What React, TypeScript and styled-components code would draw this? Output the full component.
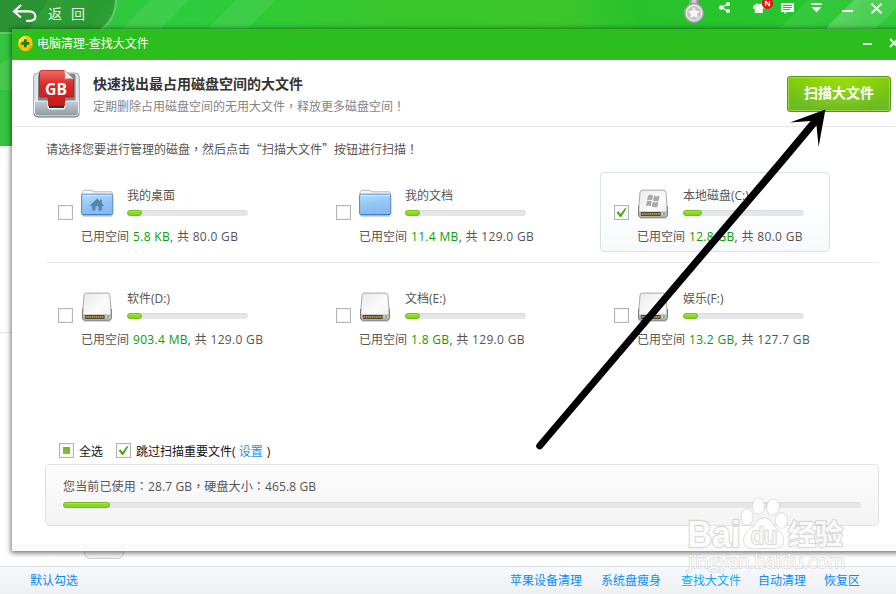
import React from 'react';
import styled, { createGlobalStyle, css } from 'styled-components';

const GlobalStyle = createGlobalStyle`
  * { box-sizing: border-box; }
  body {
    margin: 0;
    overflow: hidden;
    font: 12px/16px "Open Sans", "Noto Sans CJK SC", sans-serif;
    color: #555;
    background: #fff;
  }
`;

/* ---------- main window behind the dialog ---------- */

const Window = styled.div`
  position: relative;
  width: 896px;
  height: 594px;
  overflow: hidden;
  display: flex;
  flex-direction: column;
  background: #fff;
`;

const Banner = styled.header`
  height: 146px;
  flex: none;
  display: flex;
  justify-content: space-between;
  align-items: flex-start;
  background:
    linear-gradient(135deg, transparent 30%, rgba(255, 255, 255, 0.07) 31%, rgba(255, 255, 255, 0.07) 69%, transparent 70%) 120px 0 / 70px 30px no-repeat,
    linear-gradient(135deg, transparent 30%, rgba(255, 255, 255, 0.07) 31%, rgba(255, 255, 255, 0.07) 69%, transparent 70%) 205px 0 / 72px 30px no-repeat,
    linear-gradient(135deg, transparent 25%, rgba(255, 255, 255, 0.07) 26%, rgba(255, 255, 255, 0.03) 80%, transparent) 780px 0 / 80px 30px no-repeat,
    linear-gradient(135deg, transparent 24%, rgba(255, 255, 255, 0.2) 25%, rgba(255, 255, 255, 0.14) 70%, rgba(255, 255, 255, 0.05) 71%) 827px 0 / 80px 30px no-repeat,
    linear-gradient(145deg, transparent 50%, rgba(255, 255, 255, 0.09) 51%) 0 30px / 12px 60px no-repeat,
    linear-gradient(90deg, #35c43d 0, #2dcb3d 200px, #38c62a 400px, #3bc62a 560px, #28c12d 640px, #27c731 100%);
`;

const BackTab = styled.button`
  display: flex;
  align-items: flex-start;
  gap: 11px;
  width: 117px;
  height: 34px;
  margin: 0;
  padding: 4px 0 0 12px;
  border: 0 solid #5fcf68;
  border-width: 0 2px 2px 0;
  border-bottom-right-radius: 30px 36px;
  background: linear-gradient(125deg, #2a9232 35%, #319d36 36%, #299a30 75%, #37a53c);
  color: #e5f6e5;
  font: 14px/19px "Noto Sans CJK SC", sans-serif;
  letter-spacing: 9px;
  white-space: nowrap;
`;

const BannerTools = styled.div`
  display: flex;
  width: 212px;
  height: 26px;
`;

const Body = styled.div`
  flex: 1;
  display: flex;
  flex-direction: column;
  justify-content: flex-end;
  background: linear-gradient(#e6e6e6, #e6e6e6) 0 186px / 100% 1px no-repeat;
`;

const TabStub = styled.div`
  width: 40px;
  height: 20px;
  margin: 0 0 7px 84px;
  border: 1px solid #d2d2d2;
  border-radius: 6px;
  background: #f6f6f6;
`;

const Footer = styled.footer`
  flex: none;
  height: 28px;
  display: flex;
  align-items: center;
  padding: 1px 36px 0 30px;
  border-top: 1px solid #dce0e5;
  background: linear-gradient(#f6f8fb, #eef0f4);
`;

const FooterLinks = styled.nav`
  margin-left: auto;
  display: flex;
  gap: 20px;
`;

const Link = styled.a<{ $tone?: string; $shift?: number }>`
  color: ${(p) => p.$tone ?? '#0a8bf5'};
  margin-right: ${(p) => p.$shift ?? 0}px;
  white-space: nowrap;
`;

/* full-width punctuation centred in its cell */
const Mark = styled.span`
  font-family: "Noto Sans CJK TC", sans-serif;
`;

/* ---------- dialog ---------- */

const Dialog = styled.section`
  position: absolute;
  left: 12px;
  top: 29px;
  width: 892px;
  height: 522px;
  display: flex;
  flex-direction: column;
  background: #fff;
  box-shadow: 0 1px 5px 1px rgba(0, 0, 0, 0.55);
`;

const TitleBar = styled.div`
  flex: none;
  height: 31px;
  display: flex;
  align-items: center;
  gap: 3px;
  padding: 0 5px 3px 5px;
  background: #2cbd1e;
  color: #fff;
`;

const TitleText = styled.span`
  flex: 1;
  padding-top: 2px;
`;

const Intro = styled.div`
  flex: none;
  height: 67px;
  display: flex;
  padding: 10px 13px 0 20px;
  margin-left: 1px;
  border-bottom: 1px solid #e9e9e9;
`;

const IntroText = styled.div`
  flex: 1;
  padding: 4px 0 0 12px;
`;

const Heading = styled.h1`
  margin: 0 0 6px;
  font: bold 14px/18px "Noto Sans CJK SC", sans-serif;
  color: #333;
`;

const Sub = styled.p`
  margin: 0;
  color: #848484;
  font-family: "Noto Sans CJK SC", sans-serif;
`;

const ScanButton = styled.button`
  width: 104px;
  height: 36px;
  margin-top: 6px;
  padding: 0 0 4px;
  border: 1px solid #57961a;
  border-radius: 3px;
  box-shadow: inset 0 0 0 1px rgba(190, 235, 100, 0.55);
  background: radial-gradient(ellipse at 50% 0, #9ddc0a, transparent 75%), linear-gradient(#82cc08, #68b82a);
  color: #fff;
  font: bold 14px/18px "Noto Sans CJK SC", sans-serif;
`;

const Hint = styled.p`
  flex: none;
  margin: 14px 0 0 34px;
  font-family: "Noto Sans CJK SC", sans-serif;
`;

const Row = styled.div`
  flex: none;
  height: 103px;
  display: flex;
  gap: 48px;
  padding: 15px 0 0 32px;
`;

const Divider = styled.div`
  flex: none;
  height: 1px;
  width: 833px;
  margin: 2px 0 -3px 34px;
  background: #e9e9e9;
`;

const DiskCard = styled.div<{ $selected?: boolean }>`
  width: 230px;
  height: 80px;
  display: flex;
  padding: 13px 0 0 13px;
  border: 1px solid transparent;
  border-radius: 4px;
  ${(p) =>
    p.$selected &&
    css`
      border-color: #d3e3ea;
      background: linear-gradient(#fff 40%, #f6f9fc);
    `}
`;

const DiskInfo = styled.div`
  display: flex;
  flex-direction: column;
  margin-left: 8px;
`;

const DiskTop = styled.div`
  display: flex;
  height: 43px;
  gap: 13px;
`;

const IconSlot = styled.div`
  width: 33px;
  padding-top: 3px;
`;

const DiskName = styled.div`
  height: 16px;
  margin: 2px 0 6px;
`;

const Track = styled.div<{ $wide?: boolean }>`
  width: ${(p) => (p.$wide ? 798 : 121)}px;
  height: 6px;
  border-radius: 3px;
  background: linear-gradient(#d9d9d9, #e6e6e6 35%, #e6e6e6);
`;

const Fill = styled.div`
  height: 6px;
  border: 1px solid #76b91f;
  border-radius: 3px;
  background: linear-gradient(#b4ee4c, #86dc22 40%, #80d81e);
`;

const Usage = styled.div`
  display: flex;
  white-space: pre;
  letter-spacing: 0.32px;
  em {
    font-style: normal;
    color: #0a9d0a;
  }
`;

const UsageLabel = styled.span`
  width: 52px;
  letter-spacing: 0;
`;

const CheckFrame = styled.span<{ $drop?: number }>`
  flex: none;
  display: flex;
  align-items: center;
  justify-content: center;
  width: 15px;
  height: 15px;
  margin-top: ${(p) => p.$drop ?? 0}px;
  border: 1px solid #b5b5b5;
  background: #fff;
  box-shadow: inset 0 0 2px #ddd;
`;

const PartialMark = styled.span`
  width: 7px;
  height: 7px;
  background: linear-gradient(#6cb52d, #80c63c);
`;

const Options = styled.div`
  flex: none;
  display: flex;
  align-items: flex-start;
  height: 16px;
  margin: 80px 0 5px 47px;
  color: #111;
  span + span { margin-left: 5px; }
`;

const OptionLabel = styled.span`
  min-width: 32px;
  padding-top: 1px;
  white-space: pre;
`;

const Summary = styled.div`
  flex: none;
  width: 834px;
  height: 62px;
  margin-left: 33px;
  padding: 13px 17px 0;
  border: 1px solid #e2e2e2;
  border-radius: 5px;
  background: linear-gradient(#fcfcfc, #f4f4f4);
`;

const SummaryText = styled.div`
  height: 16px;
  margin-bottom: 8px;
  letter-spacing: 0.13px;
`;

const DialogFoot = styled.div`
  height: 7px;
  margin-top: auto;
  background: #fafafa;
`;

/* annotations that lie over the windows */
const Overlay = styled.svg`
  position: absolute;
  left: 0;
  top: 0;
  pointer-events: none;
`;

/* ---------- drawings ---------- */

const CheckMark = () => (
  <svg width="13" height="13" viewBox="0 0 13 13">
    <path d="M1.6 6.4 L3.4 5.2 L5.5 8 L10.1 2 L11.4 2.8 L6.2 11 L5 11 Z" fill="#4fa616" />
  </svg>
);

const Checkbox = ({ state, drop }: { state?: 'on' | 'partial'; drop?: number }) => (
  <CheckFrame $drop={drop}>
    {state === 'on' && <CheckMark />}
    {state === 'partial' && <PartialMark />}
  </CheckFrame>
);

const BackArrow = () => (
  <svg width="25" height="19" viewBox="0 0 25 19" fill="none" stroke="#fff" strokeWidth="2.2">
    <path d="M9 1 L2 7.5 L9 13.5 M2.5 7.3 H17 C21 7.3 23.4 9.5 23.4 12.3 C23.4 15.3 21 16.8 17.5 16.8 H14" />
  </svg>
);

const Folder = ({ home }: { home?: boolean }) => (
  <svg width="33" height="30" viewBox="0 0 33 30">
    <defs>
      <linearGradient id="folderFace" x1="0" y1="0" x2="0.3" y2="1">
        <stop offset="0" stopColor="#b9def9" />
        <stop offset="0.55" stopColor="#93c7f6" />
        <stop offset="1" stopColor="#86b9f2" />
      </linearGradient>
    </defs>
    <path d="M2 27.5 H31" stroke="#d6d6d6" />
    <path d="M1 6 V4 Q1 2.3 2.6 1.3 H10 Q12 1.3 12.5 2.8 H30 Q31.5 2.8 31.5 4.5 V8 H1Z" fill="#f7f7f7" stroke="#b5b5b5" />
    <rect x=".6" y="5.2" width="31.2" height="20.8" rx="1.6" fill="url(#folderFace)" stroke="#5288bd" />
    <path d="M1.6 6.4 H30.8" stroke="#d8effd" />
    <path d="M1.5 25.6 H31" stroke="#3f7dc9" />
    {home && (
      <path
        d="M16 9.5 L9 16.5 L10 17.5 L11.2 16.5 V21.5 H14.4 V17.3 H17.6 V21.5 H20.8 V16.5 L22 17.5 L23 16.5 L20.8 14.1 V10.5 H18.8 V12.3 Z"
        fill="#5486a9"
      />
    )}
  </svg>
);

const Drive = ({ system }: { system?: boolean }) => (
  <svg width="33" height="31" viewBox="0 0 33 31">
    <defs>
      <linearGradient id="driveTop" x1="0" y1="0" x2="1" y2="1">
        <stop offset="0" stopColor="#e9e9e9" />
        <stop offset="0.55" stopColor="#fbfbfb" />
        <stop offset="1" stopColor="#ededed" />
      </linearGradient>
    </defs>
    <path d="M2.5 29.3 H30" stroke="#ccc" />
    <path d="M5.5 1.1 H26 Q28.6 1.1 28.9 3.5 L30.4 22 V25.5 Q30.4 28.3 28 28.3 H3.8 Q1.5 28.3 1.5 25.5 V22 L3 3.5 Q3.2 1.1 5.5 1.1Z" fill="url(#driveTop)" stroke="#a9a9a9" />
    <path d="M1.6 17 V25.8 Q1.6 28.1 3.8 28.1 H28 Q30.3 28.1 30.3 25.8 V17" fill="none" stroke="#777" />
    <path d="M2.2 22 Q2.6 22.5 4 22.5 H28 Q29.4 22.5 29.8 22 V26 Q29.6 27.5 28 27.5 H4 Q2.3 27.5 2.2 26Z" fill="#a9a9a9" />
    <rect x="4" y="23" width="19.5" height="4" fill="#474747" />
    <path d="M4.5 25 H23" stroke="#d4b13a" strokeWidth="1.4" strokeDasharray="1.4 .6" />
    <rect x="24.5" y="23.3" width="4.5" height="3" fill="#c7d1c4" />
    <circle cx="27" cy="24.8" r="1" fill="#4ea64e" />
    {system && (
      <g fill="#a8a8a8" transform="translate(9 5.5)">
        <path d="M2 1.2 Q4.5 -.4 7 1 L6 5.8 Q3.5 4.6 1 6Z" />
        <path d="M8 1.3 Q10.5 2.4 13.6 1.2 L12.6 6.2 Q10 7.4 7 6.2Z" />
        <path d="M.8 7 Q3.3 5.6 5.8 7 L4.8 11.6 Q2.6 10.4 0 11.8Z" />
        <path d="M6.8 7.3 Q9.6 8.5 12.4 7.3 L11.4 12.2 Q8.8 13.3 5.9 12.1Z" />
      </g>
    )}
  </svg>
);

const GbTray = () => (
  <svg width="48" height="49" viewBox="0 0 48 49">
    <defs>
      <linearGradient id="gbRed" x1="0" y1="0" x2="0" y2="1">
        <stop offset="0" stopColor="#ef6b63" />
        <stop offset="0.4" stopColor="#d92a28" />
        <stop offset="1" stopColor="#c81818" />
      </linearGradient>
      <linearGradient id="tray" x1="0" y1="0" x2="0" y2="1">
        <stop offset="0" stopColor="#c5cfd5" />
        <stop offset="1" stopColor="#8d9ba3" />
      </linearGradient>
    </defs>
    <rect x=".7" y="3" width="45.6" height="43.5" rx="4" fill="#dfe5e8" stroke="#9ba6ac" />
    <rect x="5" y="4" width="37.5" height="28" rx="2" fill="#7c868b" />
    <path d="M1.5 31 H13 Q15 31 15 33 V37 Q15 39 17 39 H30 Q32 39 32 37 V33 Q32 31 34 31 H45.5 V42.5 Q45.5 46 42 46 H5 Q1.5 46 1.5 42.5Z" fill="url(#tray)" stroke="#f4f7f8" />
    <path d="M1 43.5 Q1.5 47 5 47 H42 Q45.6 47 46 43.5" fill="none" stroke="#65727a" />
    <path d="M9 .5 H31.5 L40.5 8.5 V27 H33 Q31.5 27 31.5 29 V36 H15.5 V29 Q15.5 27 14 27 H6.5 V2.5 Q6.5 .5 9 .5Z" fill="url(#gbRed)" stroke="#b81a18" strokeWidth=".8" />
    <path d="M31.5 .5 L40.5 8.8 Q36 7.5 32 9 Q33 5 31.5 .5Z" fill="#f2f2f2" stroke="#ccc" strokeWidth=".5" />
    <path d="M16 37 H31" stroke="#30363a" strokeWidth="2" />
    <text x="12" y="25" fill="#fff" fontFamily="Open Sans" fontWeight="700" fontSize="16" textLength="22" lengthAdjust="spacingAndGlyphs">
      GB
    </text>
  </svg>
);

const AppLogo = () => (
  <svg width="17" height="17" viewBox="0 0 17 17">
    <path d="M13.5 3.5 A7.4 7.4 0 1 0 14.6 12.5 L12 8Z" fill="#f7b90e" />
    <path d="M6 1 Q13 -.3 15 5 L15.6 9 Q16 14 10 15.8 L6 15Z" fill="#fbc70e" />
    <path d="M2 5 Q4 1.5 8 1.2 L9 4 Q4 5 2.2 9Z" fill="#ffe94d" />
    <path d="M13 12 L15.5 9 Q15 14 10 16Z" fill="#e99505" />
    <path d="M8.3 4.3 V12.3 M4.3 8.3 H12.3" stroke="#16831b" strokeWidth="2.8" />
  </svg>
);

const WindowTools = () => (
  <svg width="212" height="26" viewBox="684 0 212 26">
    <rect x="689" y="0" width="10" height="5" fill="#8d9990" />
    <rect x="691.5" y="0" width="5" height="5" fill="#c8ccc9" />
    <circle cx="694" cy="13" r="9.7" fill="#b9b9b9" stroke="#8e9e90" strokeWidth=".8" />
    <circle cx="694" cy="13" r="7.6" fill="#c4c4c4" stroke="#eee" strokeWidth="1.2" />
    <path d="M694 7 L695.8 10.8 L700 11.3 L697 14.1 L697.8 18.2 L694 16.2 L690.2 18.2 L691 14.1 L688 11.3 L692.2 10.8Z" fill="#f8f8f8" />
    <g fill="#f2fff2">
      <path d="M728 3.9 L721.5 7.5 L728 11" fill="none" stroke="#f2fff2" strokeWidth="1.4" />
      <circle cx="728" cy="4" r="2.1" />
      <circle cx="721.3" cy="7.5" r="2.3" />
      <circle cx="728" cy="11" r="2.1" />
    </g>
    <path d="M753 6 L757 3.2 H757.5 Q759.5 5 761.5 3.2 L767 5 V8 L762.8 8.5 V13 H754.8 V8.5 L753 9Z" fill="#f2fff2" />
    <circle cx="767.5" cy="3.4" r="5.6" fill="#ed0d0d" />
    <path d="M765.5 6 V1.5 H766 L769 5.5 H769.5 V1" fill="none" stroke="#fff" strokeWidth="1.3" />
    <path d="M781 3 H794 V12 H787 L784.5 14 V12 H781Z" fill="#f2fff2" />
    <path d="M783 5.5 H792 M783 7.5 H792 M783 9.5 H790" stroke="#2cb936" />
    <path d="M811 3 H822 V5 H811Z M811.5 7 H821.5 L816.5 12.5Z M842 10 H853 V12 H842Z" fill="#f2fff2" />
    <path d="M871.5 3.7 L881.5 13.3 M881.5 3.7 L871.5 13.3" stroke="#f2fff2" strokeWidth="2" />
  </svg>
);

const DialogButtons = () => (
  <svg width="41" height="12" viewBox="0 0 41 12">
    <path d="M5 7 H14" stroke="#e4fbe4" strokeWidth="2" />
    <path d="M32 2 L40 10 M40 2 L32 10" stroke="#e4fbe4" strokeWidth="2" />
  </svg>
);

const Watermark = () => (
  <g fill="#fff" fillOpacity=".85" stroke="#bdbdbd" strokeOpacity=".55" strokeWidth="1.4" strokeLinejoin="round" paintOrder="stroke">
    <ellipse cx="747" cy="517" rx="5.7" ry="8" />
    <ellipse cx="758.5" cy="506" rx="6" ry="8" />
    <ellipse cx="773" cy="507" rx="6" ry="7.8" transform="rotate(10 773 507)" />
    <ellipse cx="781.5" cy="520.5" rx="6" ry="7.6" />
    <path d="M764 518 Q769 518 773 525 Q776 529 781 533 Q786 541 781 546 Q777 549 764 548 Q750 550 746 546 Q741 539 748 531 Q754 527 757 522 Q760 518 764 518Z" />
    <text x="687.5" y="547" fontFamily="Liberation Sans" fontWeight="700" fontSize="36" textLength="53" lengthAdjust="spacingAndGlyphs" strokeWidth="2.4">Bai</text>
    <text x="751" y="544" fontFamily="Liberation Sans" fontWeight="400" fontSize="24" textLength="26" lengthAdjust="spacingAndGlyphs" strokeWidth="2.4">du</text>
    <text x="788" y="545" fontFamily="Noto Sans CJK SC" fontWeight="700" fontSize="28" textLength="55" strokeWidth="2.4">经验</text>
    <text x="688" y="568" fontFamily="Open Sans" fontSize="18" textLength="157" lengthAdjust="spacingAndGlyphs" strokeWidth="2" strokeOpacity=".4">jingyan.baidu.com</text>
  </g>
);

/* ---------- data ---------- */

type Disk = {
  name: string;
  used: string;
  total: string;
  fill: number;
  icon: React.ReactNode;
  selected?: boolean;
};

const folders: Disk[] = [
  { name: '我的桌面', used: '5.8 KB', total: '80.0 GB', fill: 15, icon: <Folder home /> },
  { name: '我的文档', used: '11.4 MB', total: '129.0 GB', fill: 15, icon: <Folder /> },
  { name: '本地磁盘(C:)', used: '12.8 GB', total: '80.0 GB', fill: 19, icon: <Drive system />, selected: true },
];

const drives: Disk[] = [
  { name: '软件(D:)', used: '903.4 MB', total: '129.0 GB', fill: 15, icon: <Drive /> },
  { name: '文档(E:)', used: '1.8 GB', total: '129.0 GB', fill: 15, icon: <Drive /> },
  { name: '娱乐(F:)', used: '13.2 GB', total: '127.7 GB', fill: 15, icon: <Drive /> },
];

const DiskItem = ({ disk }: { disk: Disk }) => (
  <DiskCard $selected={disk.selected}>
    <Checkbox state={disk.selected ? 'on' : undefined} drop={19} />
    <DiskInfo>
      <DiskTop>
        <IconSlot>{disk.icon}</IconSlot>
        <div>
          <DiskName>{disk.name}</DiskName>
          <Track>
            <Fill style={{ width: disk.fill }} />
          </Track>
        </div>
      </DiskTop>
      <Usage>
        <UsageLabel>已用空间 </UsageLabel>
        <em>{disk.used}</em>
        <span>, 共 {disk.total}</span>
      </Usage>
    </DiskInfo>
  </DiskCard>
);

export default function App() {
  return (
    <Window>
      <GlobalStyle />
      <Banner>
        <BackTab>
          <BackArrow />
          返回
        </BackTab>
        <BannerTools>
          <WindowTools />
        </BannerTools>
      </Banner>
      <Body>
        <TabStub />
        <Footer>
          <Link>默认勾选</Link>
          <FooterLinks>
            <Link $shift={-1}>苹果设备清理</Link>
            <Link>系统盘瘦身</Link>
            <Link $tone="#0aa9f0" $shift={-3}>查找大文件</Link>
            <Link $shift={-2}>自动清理</Link>
            <Link>恢复区</Link>
          </FooterLinks>
        </Footer>
      </Body>

      <Dialog>
        <TitleBar>
          <AppLogo />
          <TitleText>电脑清理-查找大文件</TitleText>
          <DialogButtons />
        </TitleBar>
        <Intro>
          <GbTray />
          <IntroText>
            <Heading>快速找出最占用磁盘空间的大文件</Heading>
            <Sub>
              定期删除占用磁盘空间的无用大文件<Mark>，</Mark>释放更多磁盘空间<Mark>！</Mark>
            </Sub>
          </IntroText>
          <ScanButton>扫描大文件</ScanButton>
        </Intro>
        <Hint>
          请选择您要进行管理的磁盘<Mark>，</Mark>然后点击“扫描大文件”按钮进行扫描<Mark>！</Mark>
        </Hint>
        <Row>
          {folders.map((d) => (
            <DiskItem key={d.name} disk={d} />
          ))}
        </Row>
        <Divider />
        <Row>
          {drives.map((d) => (
            <DiskItem key={d.name} disk={d} />
          ))}
        </Row>
        <Options>
          <Checkbox state="partial" />
          <OptionLabel>全选</OptionLabel>
          <Checkbox state="on" />
          <OptionLabel>
            {'跳过扫描重要文件( '}
            <Link $tone="#2492e6" $shift={1}>设置</Link>
            {' )'}
          </OptionLabel>
        </Options>
        <Summary>
          <SummaryText>
            您当前已使用<Mark>：</Mark>28.7 GB<Mark>，</Mark>硬盘大小<Mark>：</Mark>465.8 GB
          </SummaryText>
          <Track $wide>
            <Fill style={{ width: 47 }} />
          </Track>
        </Summary>
        <DialogFoot />
      </Dialog>

      <Overlay width="896" height="594" viewBox="0 0 896 594">
        <Watermark />
        <path
          d="M825.4 109.5 L818.6 147 L816.5 125.5 L787.7 160 L542.2 448.2 A3.4 3.4 0 0 1 537 443.8 L778 160 L810.5 121 L790 122.6 Z"
          fill="#000"
        />
      </Overlay>
    </Window>
  );
}
